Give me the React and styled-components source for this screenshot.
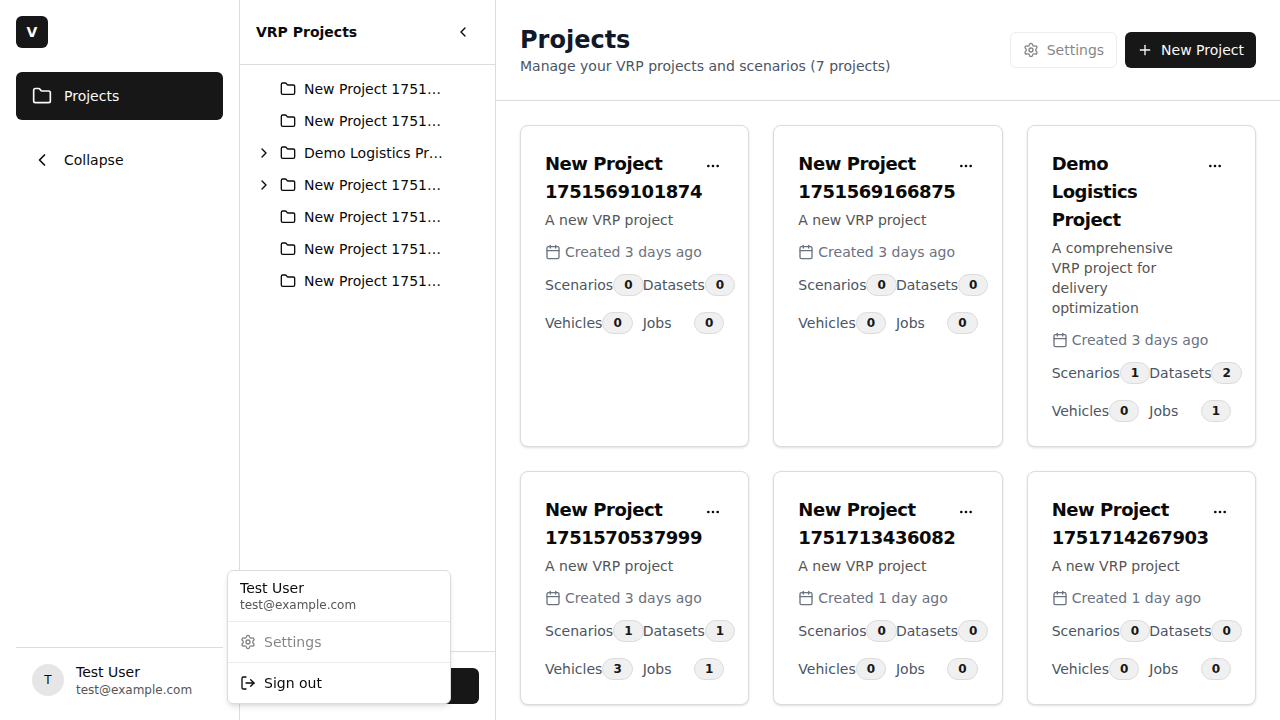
import React from "react";
import styled, { createGlobalStyle, css } from "styled-components";
import {
  Calendar,
  ChevronLeft,
  ChevronRight,
  Ellipsis,
  Folder,
  LogOut,
  Plus,
  Settings,
} from "lucide-react";

const color = {
  ink: "#0a0a0a",
  primary: "#171717",
  onPrimary: "#fafafa",
  border: "#dcdcdc",
  muted: "#555555",
  badge: "#f0f0f0",
  heading: "#111827",
  slate: "#4b5563",
  slateLight: "#6b7280",
};

const GlobalStyle = createGlobalStyle`
  *, *::before, *::after { box-sizing: border-box; }
  body {
    margin: 0;
    overflow: hidden;
    background: #fff;
    color: ${color.ink};
    font-family: "DejaVu Sans", sans-serif;
    font-size: 14px;
    line-height: 20px;
  }
  h1, h2, h3, p { margin: 0; }
  svg { display: block; flex-shrink: 0; }
`;

const Shell = styled.div`
  display: flex;
  height: 100vh;
  overflow: hidden;
`;

const buttonReset = css`
  margin: 0;
  border: 0;
  background: none;
  color: inherit;
  font: inherit;
  text-align: left;
`;

const Sidebar = styled.aside`
  display: flex;
  flex-direction: column;
  flex: none;
  width: 240px;
  padding: 16px;
  border-right: 1px solid ${color.border};
`;

const Logo = styled.div`
  display: grid;
  place-items: center;
  width: 32px;
  height: 32px;
  margin-bottom: 24px;
  border-radius: 6px;
  background: ${color.primary};
  color: ${color.onPrimary};
  font-weight: 700;
`;

const Nav = styled.nav`
  display: flex;
  flex-direction: column;
  gap: 16px;
  flex: 1;
`;

const NavButton = styled.button`
  ${buttonReset}
  display: flex;
  align-items: center;
  gap: 12px;
  height: 48px;
  padding: 0 16px;
  border-radius: 6px;
  ${(p) =>
    p.$active && `background: ${color.primary}; color: ${color.onPrimary};`}
`;

const UserSection = styled.div`
  margin-bottom: 0;
  padding-top: 8px;
  border-top: 1px solid ${color.border};
`;

const UserButton = styled.button`
  ${buttonReset}
  display: flex;
  align-items: center;
  gap: 12px;
  width: 100%;
  height: 48px;
  padding: 0 16px;
`;

const Avatar = styled.span`
  display: grid;
  place-items: center;
  width: 32px;
  height: 32px;
  border-radius: 50%;
  background: #e6e6e6;
  font-size: 12px;
  line-height: 16px;
`;

const UserText = styled.span`
  display: flex;
  flex-direction: column;
`;

const UserEmail = styled.span`
  color: ${color.muted};
  font-size: 12px;
  line-height: 16px;
`;

const Panel = styled.section`
  display: flex;
  flex-direction: column;
  flex: none;
  width: 256px;
  border-right: 1px solid ${color.border};
`;

const PanelHeader = styled.header`
  display: flex;
  align-items: center;
  justify-content: space-between;
  height: 65px;
  padding: 0 16px;
  border-bottom: 1px solid ${color.border};
`;

const PanelTitle = styled.h2`
  font-size: 14px;
  font-weight: 600;
`;

const IconButton = styled.button`
  ${buttonReset}
  display: flex;
  align-items: center;
  justify-content: center;
  width: 32px;
  height: 32px;
  padding: 0;
`;

const Tree = styled.div`
  flex: 1;
  padding: 8px;
`;

const TreeRow = styled.div`
  display: flex;
  align-items: center;
  gap: 8px;
  height: 32px;
  padding: 0 40px 0 8px;
`;

const TreeToggle = styled.span`
  width: 16px;
  height: 16px;
  flex: none;
`;

const TreeLabel = styled.span`
  flex: 1;
  min-width: 0;
  overflow: hidden;
  text-overflow: ellipsis;
  white-space: nowrap;
`;

const PanelFooter = styled.footer`
  padding: 16px;
  border-top: 1px solid ${color.border};
`;

const Button = styled.button`
  ${buttonReset}
  display: flex;
  align-items: center;
  justify-content: center;
  gap: 8px;
  width: ${(p) => (p.$full ? "100%" : "auto")};
  height: 36px;
  padding: 0 12px;
  border-radius: 6px;
  white-space: nowrap;
  ${(p) =>
    p.$outline
      ? `border: 1px solid ${color.border}; opacity: 0.5;`
      : `background: ${color.primary}; color: ${color.onPrimary};`}
`;

const Main = styled.main`
  flex: 1;
  min-width: 0;
`;

const PageHeader = styled.header`
  display: flex;
  align-items: center;
  justify-content: space-between;
  padding: 24px;
  border-bottom: 1px solid ${color.border};
`;

const PageTitle = styled.h1`
  color: ${color.heading};
  font-size: 24px;
  font-weight: 700;
  line-height: 32px;
`;

const PageSubtitle = styled.p`
  color: ${color.slate};
`;

const Actions = styled.div`
  display: flex;
  gap: 8px;
`;

const CardGrid = styled.div`
  display: grid;
  grid-template-columns: repeat(3, minmax(0, 1fr));
  gap: 24px;
  padding: 24px;
`;

const Card = styled.article`
  display: flex;
  flex-direction: column;
  gap: 12px;
  padding: 24px;
  border: 1px solid ${color.border};
  border-radius: 8px;
  background: #fff;
  box-shadow: 0 1px 3px rgba(0, 0, 0, 0.1), 0 1px 2px -1px rgba(0, 0, 0, 0.1);
`;

const CardTop = styled.div`
  display: flex;
  align-items: flex-start;
`;

const CardHeading = styled.div`
  display: flex;
  flex-direction: column;
  flex: 1;
  gap: 4px;
`;

const CardTitle = styled.h3`
  font-size: 18px;
  font-weight: 600;
  line-height: 28px;
  letter-spacing: -0.025em;
`;

const CardDescription = styled.p`
  color: ${color.muted};
`;

const Created = styled.div`
  display: flex;
  align-items: center;
  gap: 4px;
  color: ${color.slateLight};
`;

const Stats = styled.div`
  display: grid;
  grid-template-columns: repeat(2, minmax(0, 1fr));
  gap: 16px;
`;

const Stat = styled.div`
  display: flex;
  align-items: center;
  justify-content: space-between;
  color: ${color.slate};
`;

const Badge = styled.span`
  padding: 2px 10px;
  border: 1px solid ${color.border};
  border-radius: 999px;
  background: ${color.badge};
  color: ${color.primary};
  font-size: 12px;
  font-weight: 600;
  line-height: 16px;
`;

const Menu = styled.div`
  position: fixed;
  left: 227px;
  bottom: 16px;
  width: 224px;
  padding: 4px;
  border: 1px solid ${color.border};
  border-radius: 6px;
  background: #fff;
  box-shadow: 0 4px 6px -1px rgba(0, 0, 0, 0.1), 0 2px 4px -2px rgba(0, 0, 0, 0.1);
  will-change: transform;
`;

const MenuLabel = styled.div`
  display: flex;
  flex-direction: column;
  gap: 4px;
  padding: 6px 8px;
  line-height: 14px;
`;

const MenuEmail = styled.span`
  color: ${color.muted};
  font-size: 12px;
  line-height: 12px;
`;

const MenuSeparator = styled.div`
  height: 1px;
  margin: 4px -4px;
  background: #ebebeb;
`;

const MenuItem = styled.div`
  display: flex;
  align-items: center;
  gap: 8px;
  padding: 6px 8px;
  opacity: ${(p) => (p.$disabled ? 0.5 : 1)};
`;

const tree = [
  { name: "New Project 1751569101874" },
  { name: "New Project 1751569166875" },
  { name: "Demo Logistics Project", nested: true },
  { name: "New Project 1751570537999", nested: true },
  { name: "New Project 1751713436082" },
  { name: "New Project 1751714267903" },
  { name: "New Project 1751714300000" },
];

const basic = "A new VRP project";
const projects = [
  { name: "New Project 1751569101874", text: basic, age: "3 days", stats: [0, 0, 0, 0] },
  { name: "New Project 1751569166875", text: basic, age: "3 days", stats: [0, 0, 0, 0] },
  {
    name: "Demo Logistics Project",
    text: "A comprehensive VRP project for delivery optimization",
    age: "3 days",
    stats: [1, 2, 0, 1],
  },
  { name: "New Project 1751570537999", text: basic, age: "3 days", stats: [1, 1, 3, 1] },
  { name: "New Project 1751713436082", text: basic, age: "1 day", stats: [0, 0, 0, 0] },
  { name: "New Project 1751714267903", text: basic, age: "1 day", stats: [0, 0, 0, 0] },
];

const statLabels = ["Scenarios", "Datasets", "Vehicles", "Jobs"];

function ProjectCard({ project }) {
  return (
    <Card>
      <CardTop>
        <CardHeading>
          <CardTitle>{project.name}</CardTitle>
          <CardDescription>{project.text}</CardDescription>
        </CardHeading>
        <IconButton aria-label="Project actions">
          <Ellipsis size={16} />
        </IconButton>
      </CardTop>
      <Created>
        <Calendar size={16} />
        <span>{`Created ${project.age} ago`}</span>
      </Created>
      <Stats>
        {statLabels.map((label, i) => (
          <Stat key={label}>
            <span>{label}</span>
            <Badge>{project.stats[i]}</Badge>
          </Stat>
        ))}
      </Stats>
    </Card>
  );
}

export default function App() {
  return (
    <>
      <GlobalStyle />
      <Shell>
        <Sidebar>
          <Logo>V</Logo>
          <Nav>
            <NavButton $active>
              <Folder size={20} />
              Projects
            </NavButton>
            <NavButton>
              <ChevronLeft size={20} />
              Collapse
            </NavButton>
          </Nav>
          <UserSection>
            <UserButton>
              <Avatar>T</Avatar>
              <UserText>
                <span>Test User</span>
                <UserEmail>test@example.com</UserEmail>
              </UserText>
            </UserButton>
          </UserSection>
        </Sidebar>

        <Panel>
          <PanelHeader>
            <PanelTitle>VRP Projects</PanelTitle>
            <IconButton aria-label="Collapse panel">
              <ChevronLeft size={16} />
            </IconButton>
          </PanelHeader>
          <Tree>
            {tree.map((item) => (
              <TreeRow key={item.name}>
                <TreeToggle>{item.nested && <ChevronRight size={16} />}</TreeToggle>
                <Folder size={16} />
                <TreeLabel>{item.name}</TreeLabel>
              </TreeRow>
            ))}
          </Tree>
          <PanelFooter>
            <Button $full>
              <Plus size={16} />
              New Project
            </Button>
          </PanelFooter>
        </Panel>

        <Main>
          <PageHeader>
            <div>
              <PageTitle>Projects</PageTitle>
              <PageSubtitle>
                Manage your VRP projects and scenarios (7 projects)
              </PageSubtitle>
            </div>
            <Actions>
              <Button $outline>
                <Settings size={16} />
                Settings
              </Button>
              <Button>
                <Plus size={16} />
                New Project
              </Button>
            </Actions>
          </PageHeader>
          <CardGrid>
            {projects.map((project) => (
              <ProjectCard key={project.name} project={project} />
            ))}
          </CardGrid>
        </Main>
      </Shell>

      <Menu>
        <MenuLabel>
          <span>Test User</span>
          <MenuEmail>test@example.com</MenuEmail>
        </MenuLabel>
        <MenuSeparator />
        <MenuItem $disabled>
          <Settings size={16} />
          Settings
        </MenuItem>
        <MenuSeparator />
        <MenuItem>
          <LogOut size={16} />
          Sign out
        </MenuItem>
      </Menu>
    </>
  );
}
